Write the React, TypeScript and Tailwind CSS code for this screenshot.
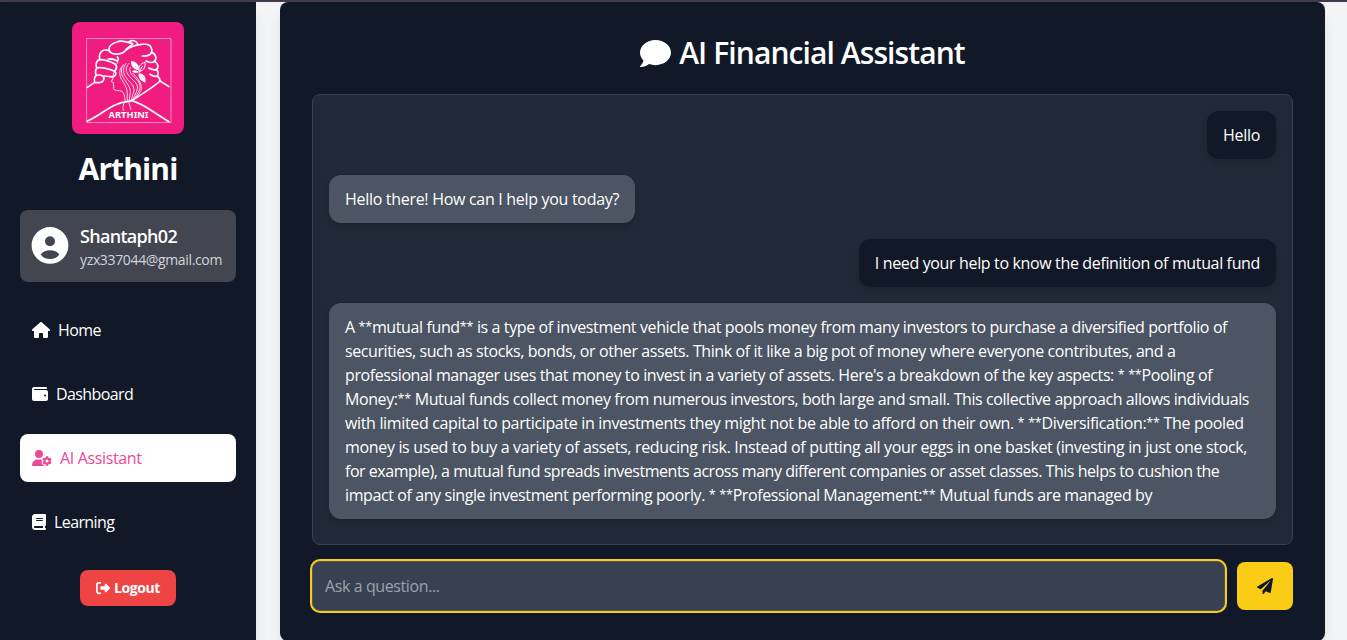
import { FaComment, FaPaperPlane } from "react-icons/fa";
import { FaHouse, FaWallet, FaUserGear, FaBook, FaRightFromBracket } from "react-icons/fa6";

const answer = [
  { tracking: "tracking-[-0.386px]", text: "A **mutual fund** is a type of investment vehicle that pools money from many investors to purchase a diversified portfolio of" },
  { tracking: "tracking-[-0.404px]", text: "securities, such as stocks, bonds, or other assets. Think of it like a big pot of money where everyone contributes, and a" },
  { tracking: "tracking-[-0.403px]", text: "professional manager uses that money to invest in a variety of assets. Here's a breakdown of the key aspects: * **Pooling of" },
  { tracking: "tracking-[-0.412px]", text: "Money:** Mutual funds collect money from numerous investors, both large and small. This collective approach allows individuals" },
  { tracking: "tracking-[-0.341px]", text: "with limited capital to participate in investments they might not be able to afford on their own. * **Diversification:** The pooled" },
  { tracking: "tracking-[-0.338px]", text: "money is used to buy a variety of assets, reducing risk. Instead of putting all your eggs in one basket (investing in just one stock," },
  { tracking: "tracking-[-0.469px]", text: "for example), a mutual fund spreads investments across many different companies or asset classes. This helps to cushion the" },
  { tracking: "tracking-[-0.406px]", text: "impact of any single investment performing poorly. * **Professional Management:** Mutual funds are managed by" },
];

function AnswerLine({ text, tracking }: { text: string; tracking: string }) {
  return (
    <p className={`h-6 ${tracking}`}>
      {text.split(/(\*+)/).map((part, i) =>
        part.startsWith("*") ? <span key={i} className="align-[2px] text-[12.5px] leading-none tracking-[-0.18px]">{part}</span> : part
      )}
    </p>
  );
}

function Avatar() {
  return (
    <svg viewBox="0 0 44 44" className="size-11" fill="white" fillRule="evenodd">
      <path d="M22 3a18.400 18.400 0 1 0 0 36.800a18.400 18.400 0 1 0 0-36.800ZM22 12.300a5 5 0 1 1 0 10a5 5 0 1 1 0-10ZM12.700 30.500C14.700 27.500 18.300 26.200 22 26.200S29.300 27.500 31.300 30.500C29.500 33.500 25.800 35 22 35S14.500 33.500 12.700 30.500Z" />
    </svg>
  );
}

function Logo() {
  return (
    <svg viewBox="0 0 112 112" className="size-28 rounded-lg bg-[#f01c80]" fill="none" stroke="white" strokeLinecap="round" strokeLinejoin="round">
      <rect x="15" y="16.500" width="84" height="84" strokeWidth="1" opacity=".5" />
      <g transform="translate(-12 -12) scale(.33333)">
        <g strokeWidth="5">
          <path d="M82 232L104 217" />
          <path d="M104 217C101 205 105 194 115 195C126 194 134 201 131 209C128 218 115 219 104 217" />
          <path d="M108 194C104 182 108 173 116 173C132 172 150 178 164 184C173 191 163 203 152 200C144 200 138 198 132 198" />
          <path d="M110 174C105 160 111 149 121 149C139 149 156 157 166 163C174 170 169 181 162 183" />
          <path d="M119 149C115 135 122 121 135 120C140 119 146 121 151 126M145 147C156 145 168 150 171 154C176 151 176 144 172 141" />
          <path d="M151 127C139 111 158 99 171 96C181 90 198 94 218 101C212 109 204 112 198 119C192 131 166 138 151 127" />
          <path d="M207 95C216 89 229 91 234 103M198 120C213 110 227 105 240 104C256 99 273 104 275 117C279 131 267 140 247 138" />
          <path d="M274 127C287 130 292 146 283 154C277 160 266 157 258 153M284 154C296 162 297 174 288 179C281 181 272 177 266 174M290 179C298 188 295 197 288 199C281 200 276 196 270 193M292 198C299 203 300 207 300 213L327 230" />
          <path d="M300 213C281 231 248 251 215 272C247 279 286 311 327 335M82 333C121 319 153 278 205 274L215 272" />
        </g>
        <path strokeWidth="2.500" d="M174 157C163 169 170 177 162 187C158 194 161 202 158 207L154 215L161 218L159 225L162 228L160 235C163 247 183 236 190 249C195 256 194 267 196 276" />
        <g strokeWidth="2.500">
          <path d="M190 164C174 192 194 207 205 226C217 245 207 256 208 272" />
          <path d="M198 160C179 187 200 206 216 223C230 241 215 254 214 270" />
          <path d="M207 160C185 184 211 201 226 217C242 234 224 251 219 268" />
          <path d="M211 172C202 190 225 200 236 216C246 232 235 249 224 264" />
          <path d="M219 190C231 205 246 216 244 237C241 249 234 255 229 261" />
          <path d="M184 171C170 196 188 211 197 229C204 243 201 259 202 274" />
          <path d="M193 276C190 285 187 291 190 301M207 276C207 286 211 288 213 299" />
        </g>
        <g fill="white" stroke="none">
          <path d="M213 153C231 154 239 168 236 181C221 178 213 170 213 153Z" />
          <path d="M236 190C252 191 259 202 256 218C241 213 234 204 236 190Z" />
          <path d="M216 184C223 178 231 180 237 186C230 190 221 190 216 184Z" />
        </g>
        <path strokeWidth="3" d="M238 185C234 171 240 161 255 157C257 171 252 181 238 185ZM238 185L247 169" />
      </g>
      <text x="56.500" y="95.500" textAnchor="middle" fill="white" stroke="none" fontSize="8.500" fontWeight="700" fontFamily="Noto Sans, sans-serif" textLength="40" lengthAdjust="spacingAndGlyphs">ARTHINI</text>
    </svg>
  );
}

export default function App() {
  return (
    <div className="flex h-[640px] w-full flex-col overflow-hidden bg-[#f3f4f6] font-['Open_Sans',sans-serif] text-base text-white">
      <div className="h-0.5 shrink-0 bg-[#42394b]" />
      <div className="flex min-h-0 flex-1">
        <aside className="flex w-64 shrink-0 flex-col items-center bg-[#111827] px-5 pt-5 shadow-lg">
          <Logo />
          <h1 className="mt-[17px] text-3xl leading-9 font-bold tracking-[-0.9px]">Arthini</h1>
          <div className="mt-[23px] flex h-[72px] w-full items-center rounded-lg bg-[#434550] pl-2">
            <Avatar />
            <div className="ml-2">
              <p className="text-lg leading-7 font-semibold tracking-[-0.7px]">Shantaph02</p>
              <p className="text-sm leading-5 tracking-[-0.35px] text-[#d1d5db]">yzx337044@gmail.com</p>
            </div>
          </div>
          <nav className="mt-6 flex w-full flex-col gap-4">
            <a className="flex h-12 items-center gap-2 rounded-lg px-3"><FaHouse className="h-4 w-[18px]" /><span className="tracking-[-0.6px]">Home</span></a>
            <a className="flex h-12 items-center gap-2 rounded-lg px-3"><FaWallet /><span className="tracking-[-0.6px]">Dashboard</span></a>
            <a className="flex h-12 items-center gap-2 rounded-lg bg-white px-3 text-[#ec4899]"><FaUserGear className="h-4 w-5" /><span className="tracking-[-0.35px]">AI Assistant</span></a>
            <a className="flex h-12 items-center gap-2 rounded-lg px-3"><FaBook className="h-4 w-3.5" /><span className="tracking-[-0.6px]">Learning</span></a>
          </nav>
          <button className="mt-6 flex h-9 w-24 items-center justify-center gap-1 rounded-lg bg-[#ef4444] text-sm font-bold tracking-[-0.4px]"><FaRightFromBracket />Logout</button>
        </aside>
        <main className="min-w-0 flex-1 pr-[22px] pl-6">
          <section className="flex h-[639px] flex-col rounded-lg bg-[#111827] px-8 shadow-lg">
            <h2 className="mt-[33px] flex h-9 items-center justify-center gap-2 text-3xl font-semibold tracking-[-0.91px]"><FaComment className="size-[31px]" /><span>AI Financial Assistant</span></h2>
            <div className="mt-[23px] flex h-[451px] shrink-0 flex-col gap-4 rounded-lg border border-[#374151] bg-[#1f2937] p-4">
              <div className="self-end rounded-xl bg-[#111827] px-4 py-3 shadow-md"><p className="tracking-[-0.3px]">Hello</p></div>
              <div className="self-start rounded-xl bg-[#4b5563] px-4 py-3 shadow-md"><p className="tracking-[-0.3px]">Hello there! How can I help you today?</p></div>
              <div className="self-end rounded-xl bg-[#111827] px-4 py-3 shadow-md"><p className="tracking-[-0.356px]">I need your help to know the definition of mutual fund</p></div>
              <div className="rounded-xl bg-[#4b5563] px-4 py-3 whitespace-nowrap shadow-md">
                {answer.map((line) => <AnswerLine key={line.text} {...line} />)}
              </div>
            </div>
            <div className="mt-4 flex items-center gap-3">
              <input placeholder="Ask a question..." className="h-[50px] min-w-0 flex-1 rounded-lg border border-[#4b5563] bg-[#374151] px-3 tracking-[-0.4px] ring-2 ring-[#facc15] placeholder:text-[#9ca3af]" />
              <button className="flex h-12 w-14 items-center justify-center rounded-lg bg-[#facc15] text-[#111827]"><FaPaperPlane /></button>
            </div>
          </section>
        </main>
      </div>
    </div>
  );
}
